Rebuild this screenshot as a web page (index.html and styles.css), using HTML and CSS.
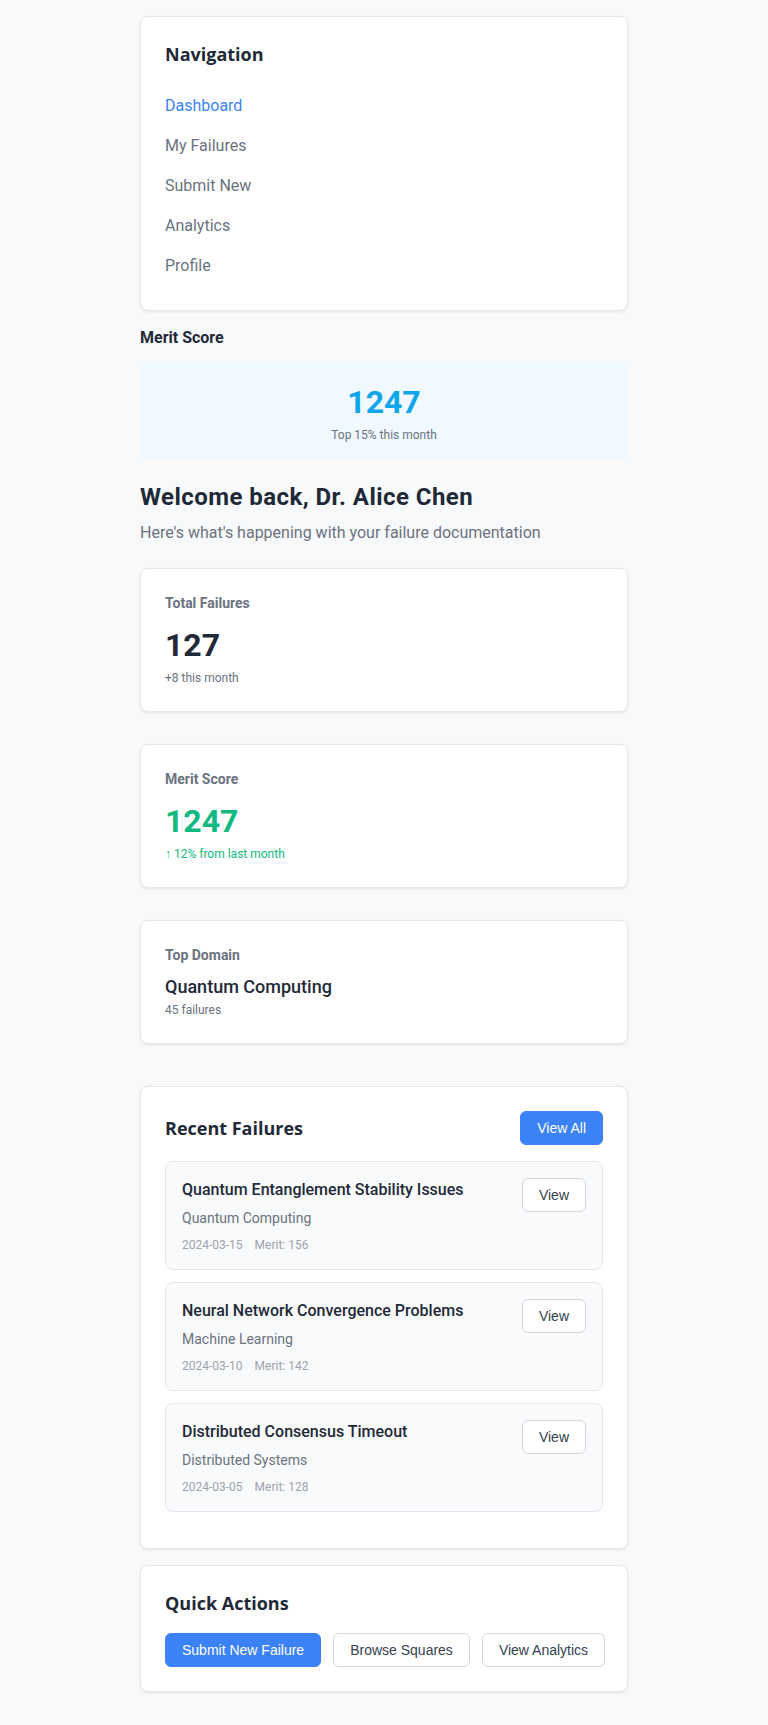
FILE: index.html
```html
<!DOCTYPE html>
<html lang="en">
<head>
<meta charset="utf-8">
<title>Dashboard</title>
<link rel="stylesheet" href="styles.css">
</head>
<body>
<div class="page">
  <aside class="sidebar">
    <nav class="card nav-card">
      <h2 class="card-title">Navigation</h2>
      <ul class="nav-list">
        <li><a class="nav-link active" href="#">Dashboard</a></li>
        <li><a class="nav-link" href="#">My Failures</a></li>
        <li><a class="nav-link" href="#">Submit New</a></li>
        <li><a class="nav-link" href="#">Analytics</a></li>
        <li><a class="nav-link" href="#">Profile</a></li>
      </ul>
    </nav>
    <section class="merit-widget">
      <h3 class="merit-heading">Merit Score</h3>
      <div class="merit-box">
        <div class="merit-value">1247</div>
        <div class="merit-note">Top 15% this month</div>
      </div>
    </section>
  </aside>

  <main class="main">
    <header class="welcome">
      <h1 class="welcome-title">Welcome back, Dr. Alice Chen</h1>
      <p class="welcome-sub">Here's what's happening with your failure documentation</p>
    </header>

    <section class="stats">
      <div class="card stat-card">
        <div class="stat-label">Total Failures</div>
        <div class="stat-value">127</div>
        <div class="stat-note">+8 this month</div>
      </div>
      <div class="card stat-card">
        <div class="stat-label">Merit Score</div>
        <div class="stat-value green">1247</div>
        <div class="stat-note green">↑ 12% from last month</div>
      </div>
      <div class="card stat-card">
        <div class="stat-label">Top Domain</div>
        <div class="stat-domain">Quantum Computing</div>
        <div class="stat-note">45 failures</div>
      </div>
    </section>

    <section class="card recent">
      <div class="recent-header">
        <h2 class="card-title">Recent Failures</h2>
        <button class="btn btn-primary">View All</button>
      </div>
      <div class="failure-item">
        <div class="failure-info">
          <div class="failure-title">Quantum Entanglement Stability Issues</div>
          <div class="failure-domain">Quantum Computing</div>
          <div class="failure-meta"><span>2024-03-15</span><span>Merit: 156</span></div>
        </div>
        <button class="btn btn-secondary">View</button>
      </div>
      <div class="failure-item">
        <div class="failure-info">
          <div class="failure-title">Neural Network Convergence Problems</div>
          <div class="failure-domain">Machine Learning</div>
          <div class="failure-meta"><span>2024-03-10</span><span>Merit: 142</span></div>
        </div>
        <button class="btn btn-secondary">View</button>
      </div>
      <div class="failure-item">
        <div class="failure-info">
          <div class="failure-title">Distributed Consensus Timeout</div>
          <div class="failure-domain">Distributed Systems</div>
          <div class="failure-meta"><span>2024-03-05</span><span>Merit: 128</span></div>
        </div>
        <button class="btn btn-secondary">View</button>
      </div>
    </section>

    <section class="card quick">
      <h2 class="card-title">Quick Actions</h2>
      <div class="quick-buttons">
        <button class="btn btn-primary">Submit New Failure</button>
        <button class="btn btn-secondary">Browse Squares</button>
        <button class="btn btn-secondary">View Analytics</button>
      </div>
    </section>
  </main>
</div>
</body>
</html>
```

FILE: styles.css
```css
* { box-sizing: border-box; }

body {
  margin: 0;
  background: #f8f9fb;
  font-family: Roboto, "Noto Sans", sans-serif;
  color: #1f2937;
}

.page {
  width: 488px;
  margin: 0 auto;
  padding: 16px 0 33px;
}

.card {
  background: #ffffff;
  border: 1px solid #e5e7eb;
  border-radius: 8px;
  box-shadow: 0 1px 3px rgba(0, 0, 0, 0.08);
  padding: 24px;
}

.card-title {
  margin: 0;
  font-family: "Open Sans", Roboto, sans-serif;
  font-size: 18px;
  line-height: 27px;
  font-weight: 700;
  color: #1f2937;
}

/* Navigation */
.nav-list {
  list-style: none;
  margin: 18px 0 0;
  padding: 0;
}

.nav-link {
  display: block;
  padding: 8px 0;
  font-size: 16px;
  line-height: 24px;
  color: #6b7280;
  text-decoration: none;
}

.nav-link.active { color: #3b82f6; }

/* Merit widget */
.merit-widget { margin-top: 15px; }

.merit-heading {
  margin: 0 0 12px;
  font-size: 16px;
  line-height: 24px;
  font-weight: 700;
  color: #1f2937;
}

.merit-box {
  background: #f0f9ff;
  border-radius: 8px;
  padding: 16px;
  text-align: center;
}

.merit-value {
  font-size: 32px;
  line-height: 48px;
  font-weight: 700;
  color: #0ea5e9;
}

.merit-note {
  font-size: 12px;
  line-height: 18px;
  color: #6b7280;
}

/* Welcome */
.welcome { margin-top: 21px; }

.welcome-title {
  margin: 0;
  font-size: 24px;
  line-height: 32px;
  font-weight: 700;
  letter-spacing: 0.45px;
  color: #1f2937;
}

.welcome-sub {
  margin: 8px 0 0;
  font-size: 16px;
  line-height: 24px;
  color: #6b7280;
}

/* Stats */
.stats {
  display: flex;
  flex-direction: column;
  gap: 32px;
  margin-top: 23px;
}

.stat-label {
  font-size: 14px;
  line-height: 20px;
  font-weight: 700;
  color: #6b7280;
  margin-bottom: 8px;
}

.stat-value {
  font-size: 32px;
  line-height: 48px;
  font-weight: 700;
  color: #1f2937;
}

.stat-domain {
  font-size: 18px;
  line-height: 28px;
  font-weight: 500;
  color: #1f2937;
}

.stat-note {
  font-size: 12px;
  line-height: 18px;
  color: #6b7280;
}

.green { color: #10b981; }

/* Recent failures */
.recent { margin-top: 42px; }

.recent-header {
  display: flex;
  justify-content: space-between;
  align-items: center;
  margin-bottom: 16px;
}

.failure-item {
  display: flex;
  justify-content: space-between;
  align-items: flex-start;
  background: #f9fafb;
  border: 1px solid #e5e7eb;
  border-radius: 8px;
  padding: 16px;
  margin-bottom: 12px;
}

.failure-title {
  font-size: 16px;
  line-height: 24px;
  font-weight: 500;
  color: #1f2937;
}

.failure-domain {
  margin-top: 6px;
  font-size: 14px;
  line-height: 20px;
  color: #6b7280;
}

.failure-meta {
  display: flex;
  gap: 12px;
  margin-top: 9px;
  font-size: 12px;
  line-height: 16px;
  color: #9ca3af;
}

/* Buttons */
.btn {
  font-family: "Liberation Sans", Arial, sans-serif;
  font-size: 14px;
  line-height: 16px;
  padding: 8px 16px;
  border-radius: 6px;
  border: 1px solid #d1d5db;
  cursor: pointer;
  white-space: nowrap;
}

.btn-primary {
  background: #3b82f6;
  border-color: #3b82f6;
  color: #ffffff;
}

.btn-secondary {
  background: #ffffff;
  color: #374151;
}

/* Quick actions */
.quick { margin-top: 16px; }

.quick-buttons {
  display: flex;
  gap: 12px;
  margin-top: 16px;
}
```
